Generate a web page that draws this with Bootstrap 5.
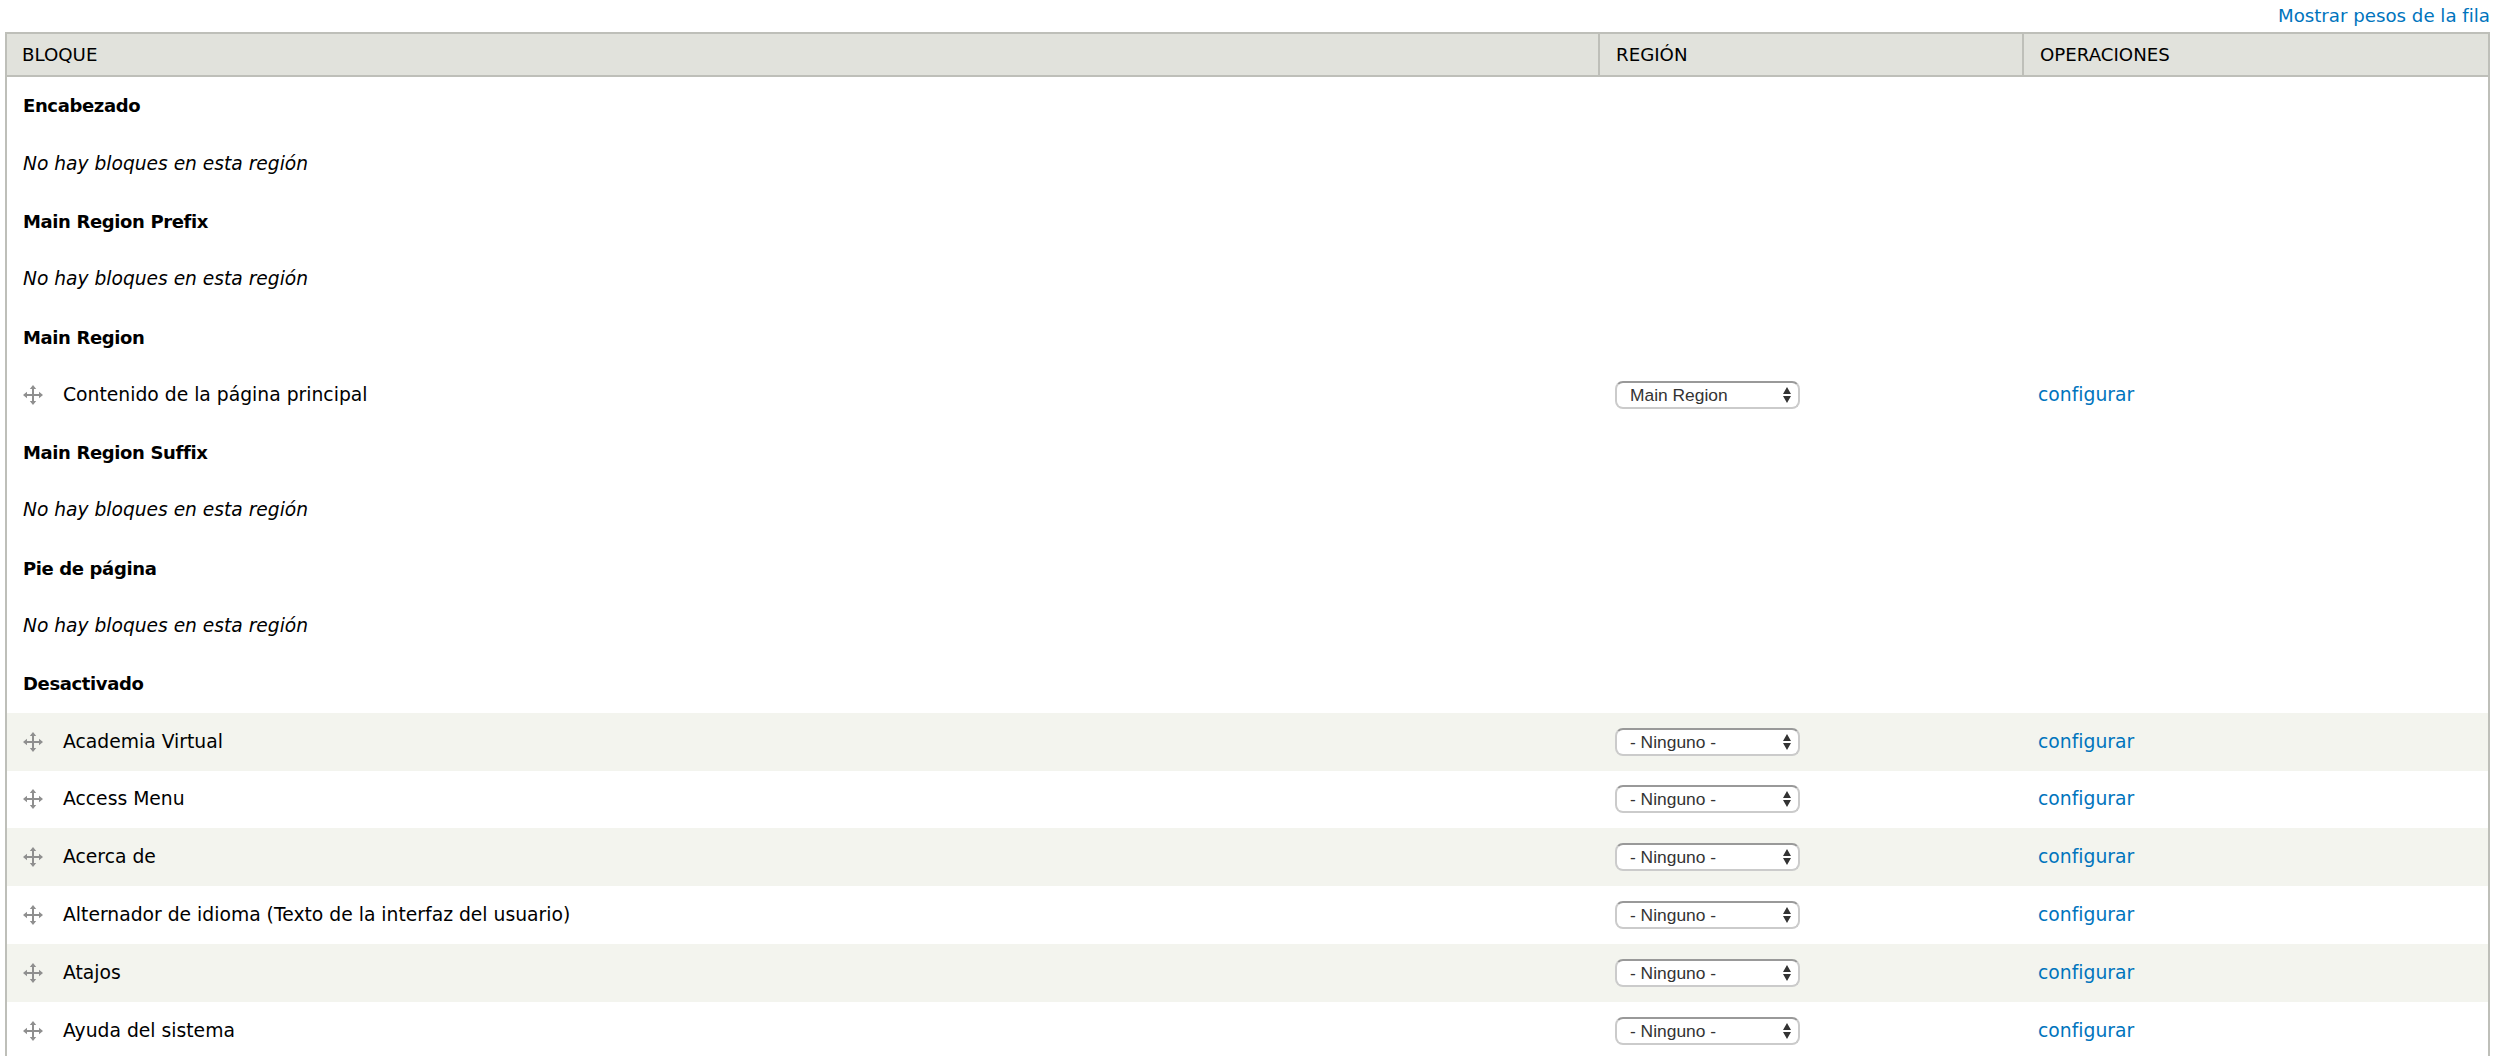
<!DOCTYPE html>
<html lang="es">
<head>
<meta charset="utf-8">
<title>Bloques</title>
<link href="https://cdn.jsdelivr.net/npm/bootstrap@5.3.0/dist/css/bootstrap.min.css" rel="stylesheet">
<style>
html,body{overflow:hidden;height:1056px;background:#fff}
body{font-family:"DejaVu Sans","Liberation Sans",sans-serif;font-size:18.75px;color:#000}
.page-wrap{padding:0 10px 0 5px}
.weight-bar{height:32px;line-height:31px;font-size:18.2px}
.weight-bar a,.cfg-link{color:#0074bd;text-decoration:none}
.block-table{table-layout:fixed;width:2485px;border-collapse:separate;border-spacing:0;margin:0;border-left:2px solid #bebfb9;border-right:2px solid #bebfb9;--bs-table-bg:transparent;--bs-table-striped-bg:transparent}
.block-table th,.block-table td{padding:0 0 0 16px;vertical-align:middle;border:0;color:#000;background:transparent;box-shadow:none}
.block-table thead th{height:45px;background:#e1e2dc;border-top:2px solid #bebfb9;border-bottom:2px solid #bebfb9;font-weight:400;text-transform:uppercase;font-size:18.2px}
.block-table thead th:first-child{padding-left:15px}
.block-table thead th+th{border-left:2px solid #bebfb9}
.block-table tbody tr{height:57.8px}
.block-table tbody td.col-reg{padding-left:17px}
.block-table tbody td.col-op{padding-left:16px}
.region-name{font-weight:700;font-size:18px;letter-spacing:-.37px}
.empty-note{font-style:italic;font-size:18.65px}
.stripe td{background:#f3f4ee!important}
.row-inner{display:flex;align-items:center;gap:20px}
.drag-ico{width:20px;height:20px;flex:none;filter:blur(.4px)}
.region-select{width:185px;height:28px;padding:0 20px 0 13px;font:17.4px/24px "Liberation Sans",sans-serif;color:#333;background-color:#fff;background-position:right 7px center;background-size:8px 16px;border:2px solid #cbcbcb;border-top-color:#999;border-radius:8px;box-shadow:none;
background-image:url("data:image/svg+xml,%3Csvg xmlns='http://www.w3.org/2000/svg' viewBox='0 0 8 16'%3E%3Cpath fill='%23333' d='M4 0l4 7H0zM4 16l-4-7h8z'/%3E%3C/svg%3E")}
</style>
</head>
<body>
<svg width="0" height="0" class="d-none"><symbol id="drag" viewBox="0 0 20 20"><path fill="#8f8f8f" d="M10 0l3.2 4H11v5h5V6.8L20 10l-4 3.200V11h-5v5h2.200L10 20l-3.200-4H9v-5H4v2.200L0 10l4-3.200V9h5V4H6.800z"/></symbol></svg>
<div class="page-wrap">
  <div class="weight-bar d-flex justify-content-end"><a href="#">Mostrar pesos de la fila</a></div>
  <table class="table block-table">
    <colgroup><col style="width:1591px"><col style="width:424px"><col></colgroup>
    <thead><tr><th>Bloque</th><th>Región</th><th>Operaciones</th></tr></thead>
    <tbody>
      <tr><td colspan="3" class="region-name">Encabezado</td></tr>
      <tr><td colspan="3" class="empty-note">No hay bloques en esta región</td></tr>
      <tr><td colspan="3" class="region-name">Main Region Prefix</td></tr>
      <tr><td colspan="3" class="empty-note">No hay bloques en esta región</td></tr>
      <tr><td colspan="3" class="region-name">Main Region</td></tr>
      <tr><td><div class="row-inner"><svg class="drag-ico"><use href="#drag"/></svg><span>Contenido de la página principal</span></div></td><td class="col-reg"><select class="form-select region-select"><option>Main Region</option></select></td><td class="col-op"><a class="cfg-link" href="#">configurar</a></td></tr>
      <tr><td colspan="3" class="region-name">Main Region Suffix</td></tr>
      <tr><td colspan="3" class="empty-note">No hay bloques en esta región</td></tr>
      <tr><td colspan="3" class="region-name">Pie de página</td></tr>
      <tr><td colspan="3" class="empty-note">No hay bloques en esta región</td></tr>
      <tr><td colspan="3" class="region-name">Desactivado</td></tr>
      <tr class="stripe"><td><div class="row-inner"><svg class="drag-ico"><use href="#drag"/></svg><span>Academia Virtual</span></div></td><td class="col-reg"><select class="form-select region-select"><option>- Ninguno -</option></select></td><td class="col-op"><a class="cfg-link" href="#">configurar</a></td></tr>
      <tr><td><div class="row-inner"><svg class="drag-ico"><use href="#drag"/></svg><span>Access Menu</span></div></td><td class="col-reg"><select class="form-select region-select"><option>- Ninguno -</option></select></td><td class="col-op"><a class="cfg-link" href="#">configurar</a></td></tr>
      <tr class="stripe"><td><div class="row-inner"><svg class="drag-ico"><use href="#drag"/></svg><span>Acerca de</span></div></td><td class="col-reg"><select class="form-select region-select"><option>- Ninguno -</option></select></td><td class="col-op"><a class="cfg-link" href="#">configurar</a></td></tr>
      <tr><td><div class="row-inner"><svg class="drag-ico"><use href="#drag"/></svg><span>Alternador de idioma (Texto de la interfaz del usuario)</span></div></td><td class="col-reg"><select class="form-select region-select"><option>- Ninguno -</option></select></td><td class="col-op"><a class="cfg-link" href="#">configurar</a></td></tr>
      <tr class="stripe"><td><div class="row-inner"><svg class="drag-ico"><use href="#drag"/></svg><span>Atajos</span></div></td><td class="col-reg"><select class="form-select region-select"><option>- Ninguno -</option></select></td><td class="col-op"><a class="cfg-link" href="#">configurar</a></td></tr>
      <tr><td><div class="row-inner"><svg class="drag-ico"><use href="#drag"/></svg><span>Ayuda del sistema</span></div></td><td class="col-reg"><select class="form-select region-select"><option>- Ninguno -</option></select></td><td class="col-op"><a class="cfg-link" href="#">configurar</a></td></tr>
    </tbody>
  </table>
</div>
<script src="https://cdn.jsdelivr.net/npm/bootstrap@5.3.0/dist/js/bootstrap.bundle.min.js"></script>
</body>
</html>
